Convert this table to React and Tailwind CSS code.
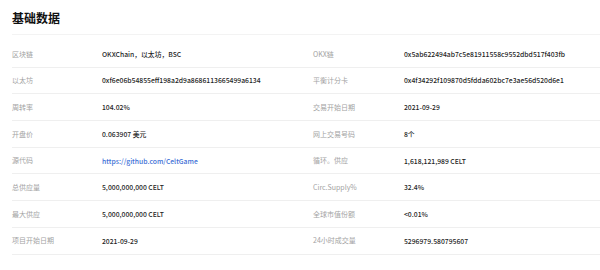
const rows = [
  ["区块链", "OKXChain，以太坊，BSC", "OKX链", "0x5ab622494ab7c5e81911558c9552dbd517f403fb"],
  ["以太坊", "0xf6e06b54855eff198a2d9a8686113665499a6134", "平衡计分卡", "0x4f34292f109870d5fdda602bc7e3ae56d520d6e1"],
  ["周转率", "104.02%", "交易开始日期", "2021-09-29"],
  ["开盘价", "0.063907 美元", "网上交易号码", "8个"],
  ["源代码", "https://github.com/CeltGame", "循环。供应", "1,618,121,989 CELT"],
  ["总供应量", "5,000,000,000 CELT", "Circ.Supply%", "32.4%"],
  ["最大供应", "5,000,000,000 CELT", "全球市值份额", "<0.01%"],
  ["项目开始日期", "2021-09-29", "24小时成交量", "5296979.580795607"],
];

function Cell({ label, value, right }) {
  const isLink = value.startsWith("https://");
  return (
    <div className={`flex items-center h-full border-b border-[#efefef] ${right ? "flex-1 pl-3" : "w-[289px]"}`}>
      <span className={`shrink-0 text-[7px] text-[#a3a3a3] ${right ? "w-[91px]" : "w-[90px]"}`}>{label}</span>
      <span className={`text-[6.8px] font-medium whitespace-nowrap ${isLink ? "text-[#3d6fd6]" : "text-[#1f1f1f]"}`}>
        {value}
      </span>
    </div>
  );
}

export default function App() {
  return (
    <div
      className="w-[600px] h-[270px] bg-white pl-3 overflow-hidden"
      style={{ fontFamily: '"Noto Sans CJK SC", "Noto Sans", sans-serif' }}
    >
      <div className="h-[35px] border-b border-[#f3f3f3] pt-[8px]">
        <h1 className="text-[12px] leading-[20px] font-bold text-[#111]">基础数据</h1>
      </div>

      <div className="mt-[6px]">
        {rows.map((r, i) => (
          <div key={i} className="flex h-[26.7px]">
            <Cell label={r[0]} value={r[1]} />
            <Cell label={r[2]} value={r[3]} right />
          </div>
        ))}
      </div>
    </div>
  );
}
